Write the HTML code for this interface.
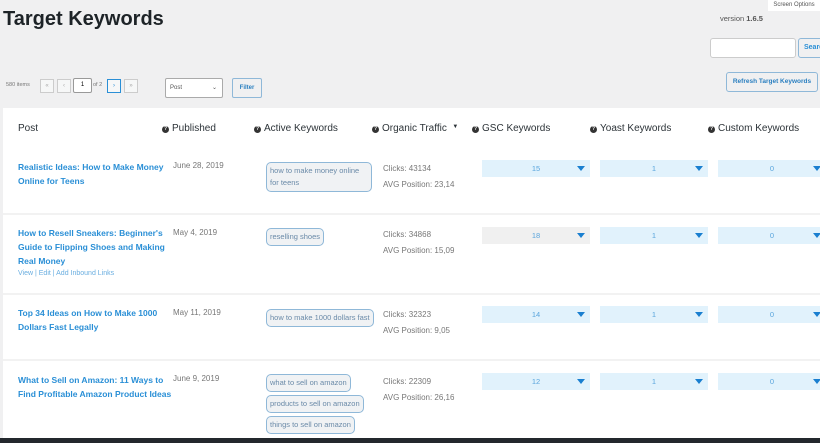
<!DOCTYPE html><html><head><style>
body{margin:0;width:820px;height:443px;overflow:hidden;background:#f0f0f1;font-family:"Liberation Sans",sans-serif;position:relative}
.a{position:absolute;white-space:nowrap}
.t{font-size:8px;color:#777}
.l{font-size:8.5px;color:#2a8fd6;font-weight:bold;line-height:14px}
.h{font-size:10px;color:#2c3338}
.q{display:inline-block;width:7px;height:7px;border-radius:50%;background:#333;color:#fff;font-size:5px;line-height:7px;text-align:center;vertical-align:1px;margin-right:3px;font-weight:bold}
.kw{position:absolute;border:1px solid #8fb8d8;border-radius:5px;background:#f0f2f4;font-size:7.5px;color:#6a8aa8;padding:2px 3px;line-height:12px}
.sel{position:absolute;width:108px;height:17px;background:#e1f2fc;font-size:7.5px;color:#5aa5dd;text-align:center;line-height:17px}
.sel:after{content:"";position:absolute;right:5px;top:6px;border-left:4px solid transparent;border-right:4px solid transparent;border-top:5px solid #1a7fd0}
.sep{position:absolute;left:3px;right:0;height:2px;background:#f2f2f2}
.btn{position:absolute;border:1px solid #ccc;background:#f6f7f7;height:12px;width:12px;font-size:6px;color:#aaa;text-align:center;line-height:12px}
</style></head><body>
<div class="a" style="left:3px;top:8px;font-size:20px;font-weight:bold;color:#1d2327">Target Keywords</div>
<div class="a" style="left:768px;top:0;width:52px;height:11px;background:#fff;font-size:6px;color:#555;text-align:center;line-height:11px">Screen Options</div>
<div class="a" style="left:720px;top:14px;font-size:7.5px;color:#555">version <b>1.6.5</b></div>
<div class="a" style="left:710px;top:38px;width:84px;height:18px;background:#fff;border:1px solid #ccc;border-radius:3px"></div>
<div class="a" style="left:798px;top:38px;width:30px;height:18px;border:1px solid #8fb8d8;border-radius:3px;font-size:7px;color:#2a8fd6;font-weight:bold;line-height:18px;padding-left:5px">Search</div>
<div class="a" style="left:726px;top:72px;width:90px;height:18px;border:1px solid #8fb8d8;border-radius:3px;font-size:6.5px;color:#2a7fc0;font-weight:bold;line-height:18px;text-align:center">Refresh Target Keywords</div>
<div class="a" style="left:6px;top:82px;font-size:5.5px;color:#777">580 items</div>
<div class="btn" style="left:40px;top:79px">«</div><div class="btn" style="left:57px;top:79px">‹</div>
<div class="a" style="left:73px;top:78px;width:17px;height:13px;border:1px solid #999;border-radius:2px;background:#fff;font-size:6px;text-align:center;line-height:13px">1</div>
<div class="a" style="left:93px;top:82px;font-size:5.5px;color:#777">of 2</div>
<div class="btn" style="left:107px;top:79px;border-color:#2a8fd6;color:#2a8fd6">›</div><div class="btn" style="left:124px;top:79px">»</div>
<div class="a" style="left:165px;top:78px;width:52px;height:18px;border:1px solid #aaa;border-radius:2px;background:#fff;font-size:6px;color:#555;line-height:18px;padding-left:4px">Post<span style="position:absolute;right:5px">⌄</span></div>
<div class="a" style="left:232px;top:78px;width:28px;height:18px;border:1px solid #8fb8d8;border-radius:2px;font-size:6px;color:#2a7fc0;font-weight:bold;line-height:18px;text-align:center">Filter</div>
<div class="a" style="left:3px;top:108px;width:817px;height:330px;background:#fff"></div>
<div class="a" style="left:0;top:438px;width:820px;height:5px;background:#23282d"></div>
<div class="a h" style="left:18px;top:123px">Post</div>
<div class="a h" style="left:162px;top:123px"><span class="q">?</span>Published</div>
<div class="a h" style="left:254px;top:123px"><span class="q">?</span>Active Keywords</div>
<div class="a h" style="left:372px;top:123px"><span class="q">?</span>Organic Traffic &nbsp;<span style="font-size:6px;vertical-align:3px">▼</span></div>
<div class="a h" style="left:472px;top:123px"><span class="q">?</span>GSC Keywords</div>
<div class="a h" style="left:590px;top:123px"><span class="q">?</span>Yoast Keywords</div>
<div class="a h" style="left:708px;top:123px"><span class="q">?</span>Custom Keywords</div>
<div class="sep" style="top:213px"></div><div class="sep" style="top:293px"></div><div class="sep" style="top:359px"></div>
<div class="a l" style="left:18px;top:160px">Realistic Ideas: How to Make Money<br>Online for Teens</div>
<div class="a t" style="left:173px;top:161px">June 28, 2019</div>
<div class="kw" style="left:266px;top:162px;width:98px;white-space:normal">how to make money online for teens</div>
<div class="a t" style="left:383px;top:161px;line-height:16px">Clicks: 43134<br>AVG Position: 23,14</div>
<div class="sel" style="left:482px;top:160px">15</div><div class="sel" style="left:600px;top:160px">1</div><div class="sel" style="left:718px;top:160px">0</div>
<div class="a l" style="left:18px;top:226px">How to Resell Sneakers: Beginner's<br>Guide to Flipping Shoes and Making<br>Real Money</div>
<div class="a" style="left:18px;top:270px;font-size:7px;color:#6aaee0">View | Edit | Add Inbound Links</div>
<div class="a t" style="left:173px;top:228px">May 4, 2019</div>
<div class="kw" style="left:266px;top:228px">reselling shoes</div>
<div class="a t" style="left:383px;top:227px;line-height:16px">Clicks: 34868<br>AVG Position: 15,09</div>
<div class="sel" style="left:482px;top:227px;background:#f0f0f0">18</div><div class="sel" style="left:600px;top:227px">1</div><div class="sel" style="left:718px;top:227px">0</div>
<div class="a l" style="left:18px;top:306px">Top 34 Ideas on How to Make 1000<br>Dollars Fast Legally</div>
<div class="a t" style="left:173px;top:308px">May 11, 2019</div>
<div class="kw" style="left:266px;top:309px">how to make 1000 dollars fast</div>
<div class="a t" style="left:383px;top:307px;line-height:16px">Clicks: 32323<br>AVG Position: 9,05</div>
<div class="sel" style="left:482px;top:306px">14</div><div class="sel" style="left:600px;top:306px">1</div><div class="sel" style="left:718px;top:306px">0</div>
<div class="a l" style="left:18px;top:373px">What to Sell on Amazon: 11 Ways to<br>Find Profitable Amazon Product Ideas</div>
<div class="a t" style="left:173px;top:374px">June 9, 2019</div>
<div class="kw" style="left:266px;top:374px">what to sell on amazon</div>
<div class="kw" style="left:266px;top:395px">products to sell on amazon</div>
<div class="kw" style="left:266px;top:416px">things to sell on amazon</div>
<div class="a t" style="left:383px;top:374px;line-height:16px">Clicks: 22309<br>AVG Position: 26,16</div>
<div class="sel" style="left:482px;top:373px">12</div><div class="sel" style="left:600px;top:373px">1</div><div class="sel" style="left:718px;top:373px">0</div>
</body></html>
